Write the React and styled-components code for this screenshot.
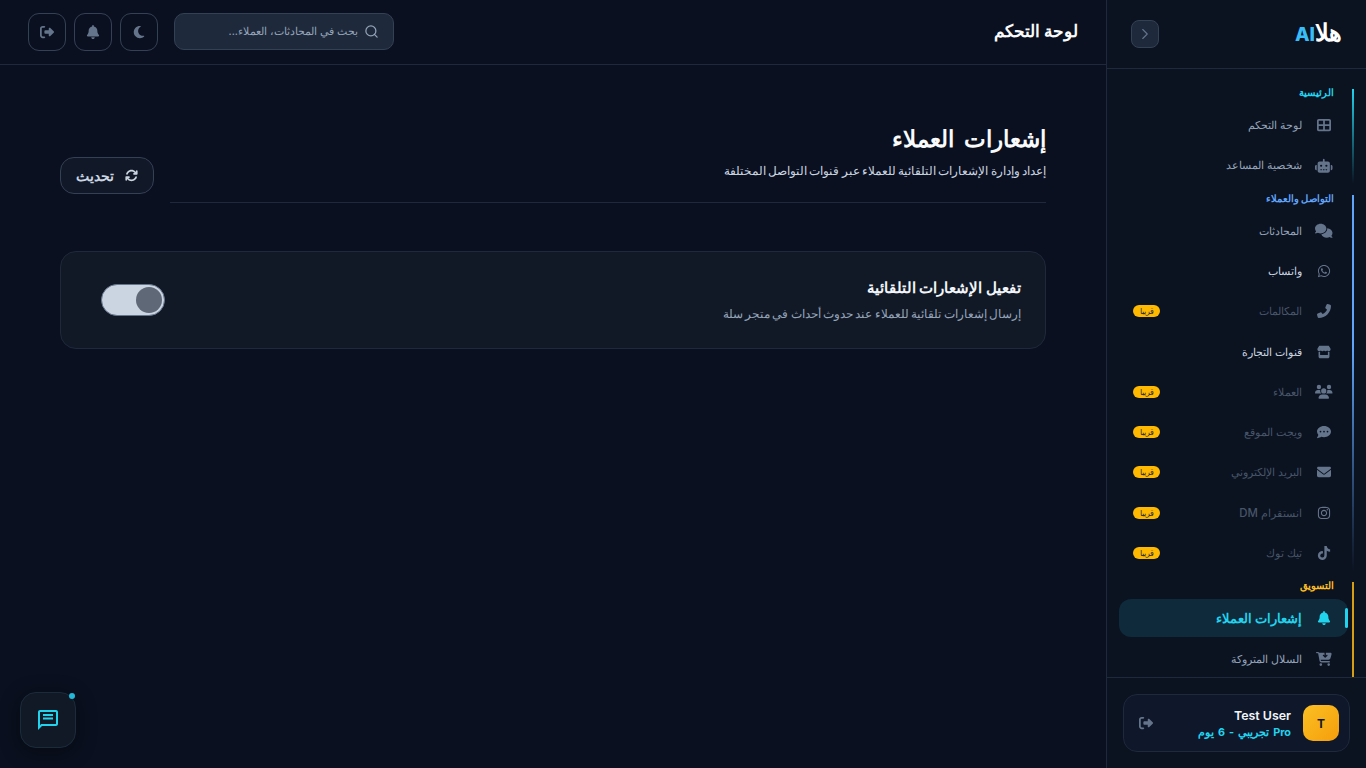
import styled, { createGlobalStyle } from "styled-components";
import {
  FaArrowsRotate,
  FaBell,
  FaCartArrowDown,
  FaCommentDots,
  FaComments,
  FaEnvelope,
  FaInstagram,
  FaMoon,
  FaPhoneFlip,
  FaRightFromBracket,
  FaRobot,
  FaStore,
  FaTableCellsLarge,
  FaTiktok,
  FaUsers,
  FaWhatsapp,
} from "react-icons/fa6";
import { ChevronRight, Search } from "lucide-react";

const GlobalStyle = createGlobalStyle`
  * { box-sizing: border-box; }
  html, body { margin: 0; height: 100%; overflow: hidden; }
  body {
    background: #0a101f;
    font-family: Inter, "Noto Sans", sans-serif;
  }
`;

const Shell = styled.div`
  display: flex;
  direction: rtl;
  width: 1366px;
  height: 768px;
  background: #0a101f;
`;

const Sidebar = styled.aside`
  width: 260px;
  height: 768px;
  flex: none;
  display: flex;
  flex-direction: column;
  background: #0b1220;
  border-left: 1px solid #1e293b;
`;

const Brand = styled.div`
  height: 69px;
  flex: none;
  display: flex;
  align-items: center;
  justify-content: space-between;
  padding: 0 24px;
  border-bottom: 1px solid #1e293b;
`;

const Logo = styled.div`
  margin-bottom: 4px;
  font-size: 24px;
  font-weight: 800;
  color: #fff;
  span { font-size: 19px; color: #38bdf8; }
`;

const CollapseButton = styled.button`
  width: 28px;
  height: 28px;
  padding: 0;
  display: flex;
  align-items: center;
  justify-content: center;
  color: #64748b;
  background: #1e293b;
  border: 1px solid #334155;
  border-radius: 8px;
`;

const Nav = styled.nav`
  flex: 1;
  min-height: 0;
  overflow: hidden;
  padding: 20px 12px 0 12px;
`;

const Group = styled.section`
  position: relative;
  margin-bottom: 10.5px;
  &::before {
    content: "";
    position: absolute;
    top: 0;
    bottom: 0;
    right: 0;
    width: 2px;
    background: ${(p) => p.$line};
  }
`;

const GroupLabel = styled.div`
  height: 8px;
  margin-bottom: 9px;
  padding-right: 20px;
  font-size: 10px;
  line-height: 6px;
  font-weight: 700;
  color: ${(p) => p.$color};
`;

const Item = styled.div`
  position: relative;
  height: 38px;
  margin: 2.25px 6px 0 0;
  padding-right: 15px;
  display: flex;
  align-items: center;
  gap: 13px;
  border-radius: 12px;
  font-size: ${(p) => (p.$active ? "13px" : "11.4px")};
  font-weight: ${(p) => (p.$active ? 700 : 500)};
  color: ${(p) => (p.$active ? "#22d3ee" : p.$bright ? "#cbd5e1" : p.$soon ? "#475569" : "#94a3b8")};
  background: ${(p) => (p.$active ? "#0f2a3a" : "transparent")};
  svg { flex: none; }
`;

const ItemIcon = styled.span`
  width: 18px;
  display: flex;
  justify-content: center;
  color: ${(p) => (p.$active ? "#22d3ee" : "#64748b")};
`;

const ActiveBar = styled.span`
  position: absolute;
  top: 9px;
  right: 0;
  width: 3px;
  height: 20px;
  background: #22d3ee;
  border-radius: 2px;
`;

const SoonBadge = styled.span`
  margin-right: auto;
  margin-left: 14px;
  width: 27px;
  height: 12px;
  display: flex;
  align-items: center;
  justify-content: center;
  background: #ffb900;
  color: #1e293b;
  border-radius: 6px;
  font-size: 8px;
`;

const Footer = styled.div`
  height: 91px;
  flex: none;
  padding: 16px;
  border-top: 1px solid #1e293b;
`;

const UserCard = styled.div`
  height: 58px;
  padding: 0 10px 0 13px;
  display: flex;
  align-items: center;
  gap: 12px;
  background: #0f172a;
  border: 1px solid #1e293b;
  border-radius: 14px;
`;

const Avatar = styled.div`
  width: 36px;
  height: 36px;
  display: flex;
  align-items: center;
  justify-content: center;
  background: linear-gradient(135deg, #fbbf24, #f59e0b);
  border-radius: 10px;
  color: #0f172a;
  font-size: 12px;
  font-weight: 700;
`;

const UserInfo = styled.div`
  flex: 1;
  display: flex;
  flex-direction: column;
  gap: 3px;
`;

const UserName = styled.div`
  direction: ltr;
  text-align: right;
  font-size: 12.4px;
  font-weight: 600;
  color: #f1f5f9;
`;

const UserPlan = styled.div`
  font-size: 10.8px;
  font-weight: 700;
  word-spacing: 1.5px;
  color: #22d3ee;
`;

const Main = styled.main`
  flex: 1;
  min-width: 0;
  display: flex;
  flex-direction: column;
  position: relative;
`;

const Header = styled.header`
  height: 65px;
  flex: none;
  padding: 0 28px;
  display: flex;
  align-items: center;
  justify-content: space-between;
  border-bottom: 1px solid #1e293b;
`;

const PageName = styled.h1`
  margin: 0 0 2px;
  font-size: 17px;
  font-weight: 700;
  color: #f8fafc;
`;

const HeaderTools = styled.div`
  display: flex;
  align-items: center;
  gap: 8px;
`;

const SearchBox = styled.div`
  width: 220px;
  height: 37px;
  margin-left: 8px;
  margin-bottom: 1px;
  padding: 0 14px;
  display: flex;
  align-items: center;
  gap: 6px;
  background: #1e293b;
  border: 1px solid #334155;
  border-radius: 10px;
  color: #94a3b8;
  font-size: 10.8px;
`;

const ToolButton = styled.button`
  width: 38px;
  height: 38px;
  padding: 0;
  display: flex;
  align-items: center;
  justify-content: center;
  background: transparent;
  border: 1px solid #334155;
  border-radius: 11px;
  color: #64748b;
`;

const Content = styled.div`
  padding: 62px 60px 0 60px;
`;

const PageHead = styled.div`
  display: flex;
  align-items: flex-end;
  gap: 16px;
`;

const HeadText = styled.div`
  flex: 1;
  height: 76px;
  border-bottom: 1px solid #1e293b;
`;

const PageTitle = styled.h2`
  margin: 0;
  font-size: 23px;
  line-height: 24px;
  font-weight: 700;
  word-spacing: 5px;
  color: #f8fafc;
`;

const PageSub = styled.p`
  margin: 11px 0 0;
  font-size: 11.6px;
  line-height: 18px;
  word-spacing: -1px;
  color: #cbd5e1;
`;

const RefreshButton = styled.button`
  width: 94px;
  height: 37px;
  margin-bottom: 9px;
  display: flex;
  align-items: center;
  justify-content: center;
  gap: 11px;
  background: #111827;
  border: 1px solid #334155;
  border-radius: 14px;
  color: #cbd5e1;
  font-family: inherit;
  font-size: 14px;
  font-weight: 700;
`;

const SettingCard = styled.div`
  height: 98px;
  margin-top: 48px;
  padding: 0 24px 0 40px;
  display: flex;
  align-items: center;
  justify-content: space-between;
  background: #121926;
  border: 1px solid #1e293b;
  border-radius: 16px;
`;

const SettingTitle = styled.div`
  font-size: 15px;
  line-height: 20px;
  font-weight: 700;
  color: #f1f5f9;
`;

const SettingSub = styled.div`
  margin-top: 7px;
  font-size: 11.7px;
  line-height: 18px;
  word-spacing: -0.9px;
  color: #94a3b8;
`;

const Toggle = styled.div`
  width: 64px;
  height: 32px;
  padding: 2px;
  display: flex;
  justify-content: flex-end;
  direction: ltr;
  background: #cbd5e1;
  border: 1px solid #64748b;
  border-radius: 16px;
`;

const Knob = styled.span`
  width: 26px;
  height: 26px;
  background: #5f6877;
  border-radius: 50%;
`;

const ChatFab = styled.button`
  position: absolute;
  left: 20px;
  bottom: 20px;
  width: 56px;
  height: 56px;
  padding: 0;
  display: flex;
  align-items: center;
  justify-content: center;
  background: #121926;
  border: 1px solid #1a2c3a;
  border-radius: 16px;
  color: #22d3ee;
  box-shadow: 0 4px 20px rgba(0, 0, 0, 0.4);
`;

const FabDot = styled.span`
  position: absolute;
  top: 0;
  left: 48px;
  width: 6px;
  height: 6px;
  background: #22b8d8;
  border-radius: 50%;
`;

const groups = [
  {
    label: "الرئيسية",
    color: "#22d3ee",
    line: "linear-gradient(to bottom, #22d3ee, transparent)",
    items: [
      { icon: FaTableCellsLarge, size: 14, text: "لوحة التحكم" },
      { icon: FaRobot, size: 17.5, text: "شخصية المساعد" },
    ],
  },
  {
    label: "التواصل والعملاء",
    color: "#60a5fa",
    line: "linear-gradient(to bottom, #60a5fa 40%, transparent)",
    items: [
      { icon: FaComments, size: 17.5, text: "المحادثات" },
      { icon: FaWhatsapp, size: 14, text: "واتساب", bright: true },
      { icon: FaPhoneFlip, size: 14, text: "المكالمات", soon: true },
      { icon: FaStore, size: 14, text: "قنوات التجارة", bright: true },
      { icon: FaUsers, size: 17.5, text: "العملاء", soon: true },
      { icon: FaCommentDots, size: 14, text: "ويجت الموقع", soon: true },
      { icon: FaEnvelope, size: 14, text: "البريد الإلكتروني", soon: true },
      { icon: FaInstagram, size: 14, text: "انستقرام DM", soon: true },
      { icon: FaTiktok, size: 14, text: "تيك توك", soon: true },
    ],
  },
  {
    label: "التسويق",
    color: "#fbbf24",
    line: "#d69e16",
    items: [
      { icon: FaBell, size: 14, text: "إشعارات العملاء", active: true },
      { icon: FaCartArrowDown, size: 15.75, text: "السلال المتروكة" },
    ],
  },
];

export default function App() {
  return (
    <>
      <GlobalStyle />
      <Shell>
        <Sidebar>
          <Brand>
            <Logo>
              هلا<span>AI</span>
            </Logo>
            <CollapseButton>
              <ChevronRight size={18} strokeWidth={1.5} />
            </CollapseButton>
          </Brand>
          <Nav>
            {groups.map((group) => (
              <Group key={group.label} $line={group.line}>
                <GroupLabel $color={group.color}>{group.label}</GroupLabel>
                {group.items.map((item) => {
                  const Icon = item.icon;
                  return (
                    <Item key={item.text} $active={item.active} $bright={item.bright} $soon={item.soon}>
                      {item.active && <ActiveBar />}
                      <ItemIcon $active={item.active}>
                        <Icon size={item.size} />
                      </ItemIcon>
                      {item.text}
                      {item.soon && <SoonBadge>قريبا</SoonBadge>}
                    </Item>
                  );
                })}
              </Group>
            ))}
          </Nav>
          <Footer>
            <UserCard>
              <Avatar>T</Avatar>
              <UserInfo>
                <UserName>Test User</UserName>
                <UserPlan>Pro تجريبي - 6 يوم</UserPlan>
              </UserInfo>
              <ItemIcon>
                <FaRightFromBracket size={14} />
              </ItemIcon>
            </UserCard>
          </Footer>
        </Sidebar>
        <Main>
          <Header>
            <PageName>لوحة التحكم</PageName>
            <HeaderTools>
              <SearchBox>
                <Search size={15} strokeWidth={2} />
                بحث في المحادثات، العملاء...
              </SearchBox>
              <ToolButton>
                <FaMoon size={14} />
              </ToolButton>
              <ToolButton>
                <FaBell size={14} />
              </ToolButton>
              <ToolButton>
                <FaRightFromBracket size={14} />
              </ToolButton>
            </HeaderTools>
          </Header>
          <Content>
            <PageHead>
              <HeadText>
                <PageTitle>إشعارات العملاء</PageTitle>
                <PageSub>إعداد وإدارة الإشعارات التلقائية للعملاء عبر قنوات التواصل المختلفة</PageSub>
              </HeadText>
              <RefreshButton>
                <FaArrowsRotate size={13} />
                تحديث
              </RefreshButton>
            </PageHead>
            <SettingCard>
              <div>
                <SettingTitle>تفعيل الإشعارات التلقائية</SettingTitle>
                <SettingSub>إرسال إشعارات تلقائية للعملاء عند حدوث أحداث في متجر سلة</SettingSub>
              </div>
              <Toggle>
                <Knob />
              </Toggle>
            </SettingCard>
          </Content>
          <ChatFab>
            <svg width="24" height="24" viewBox="0 0 24 24" fill="currentColor">
              <path d="M20 2H4c-1.1 0-2 .9-2 2v18l4-4h14c1.1 0 2-.9 2-2V4c0-1.1-.9-2-2-2zm0 14H5.17L4 17.17V4h16v12z" />
              <path d="M7 6h10v2H7zM7 9.5h10v2H7z" />
            </svg>
            <FabDot />
          </ChatFab>
        </Main>
      </Shell>
    </>
  );
}
